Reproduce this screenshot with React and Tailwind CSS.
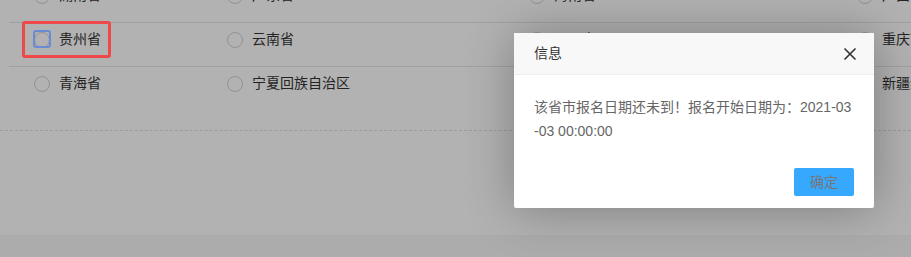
import React from "react";

const rows = [
  ["湖南省", "广东省", "海南省", "广西壮族自治区"],
  ["贵州省", "云南省", "四川省", "重庆市"],
  ["青海省", "宁夏回族自治区", "甘肃省", "新疆维吾尔自治区"],
];

const Radio = ({ label }) => (
  <label className="flex items-center gap-[9px] whitespace-nowrap">
    <span className="h-4 w-4 shrink-0 rounded-full border border-[#d2d2d2] bg-white" />
    <span>{label}</span>
  </label>
);

const App = () => {
  return (
    <div
      className="relative h-[257px] w-[911px] overflow-hidden bg-white text-[14px] text-[#333]"
      style={{ fontFamily: '"Liberation Sans", "Noto Sans CJK SC", sans-serif' }}
    >
      {/* page underneath */}
      <div className="flex h-full flex-col">
        <div className="-mt-[22px] pl-[9px]">
          {rows.map((row, i) => (
            <div key={i} className="h-[44px] border-t border-[#e6e6e6]">
              <div className="grid h-[33px] grid-cols-[193px_302px_328px_1fr] items-center pl-[25px]">
                {row.map((p) => (
                  <Radio key={p} label={p} />
                ))}
              </div>
            </div>
          ))}
        </div>
        <div className="mt-5 border-t border-dashed border-[#e0e0e0]" />
        <div className="grow" />
        <div className="h-[22px] bg-[#f7f7f7]" />
      </div>

      {/* modal shade */}
      <div className="absolute inset-0 bg-black/30" />

      {/* highlight marks */}
      <div className="absolute left-[22px] top-[21px] h-[37px] w-[89px] rounded-[3px] border-[3px] border-[#ee4848]" />
      <div className="absolute left-[33px] top-[30px] h-[18px] w-[18px] rounded-[3px] border-2 border-[#6a8bd4]" />

      {/* dialog */}
      <div className="absolute left-[514px] top-[33px] w-[360px] rounded-[2px] bg-white shadow-[1px_1px_50px_rgba(0,0,0,0.3)]">
        <div className="flex h-[42px] items-center justify-between border-b border-[#eee] bg-[#f8f8f8] pl-5 pr-[17px] text-[#333]">
          <span>信息</span>
          <svg width="14" height="14" viewBox="0 0 14 14" fill="none">
            <path d="M1.5 1.5L12.5 12.5M12.5 1.5L1.5 12.5" stroke="#333" strokeWidth="1.6" />
          </svg>
        </div>
        <div className="break-all p-5 leading-[24px] text-[#666]">
          该省市报名日期还未到！报名开始日期为：2021-03-03 00:00:00
        </div>
        <div className="flex justify-end px-5 pb-3 pt-[5px]">
          <button className="h-7 w-[60px] rounded-[2px] bg-[#36a9ff] text-[14px] text-[#777]">
            确定
          </button>
        </div>
      </div>
    </div>
  );
};

export default App;
